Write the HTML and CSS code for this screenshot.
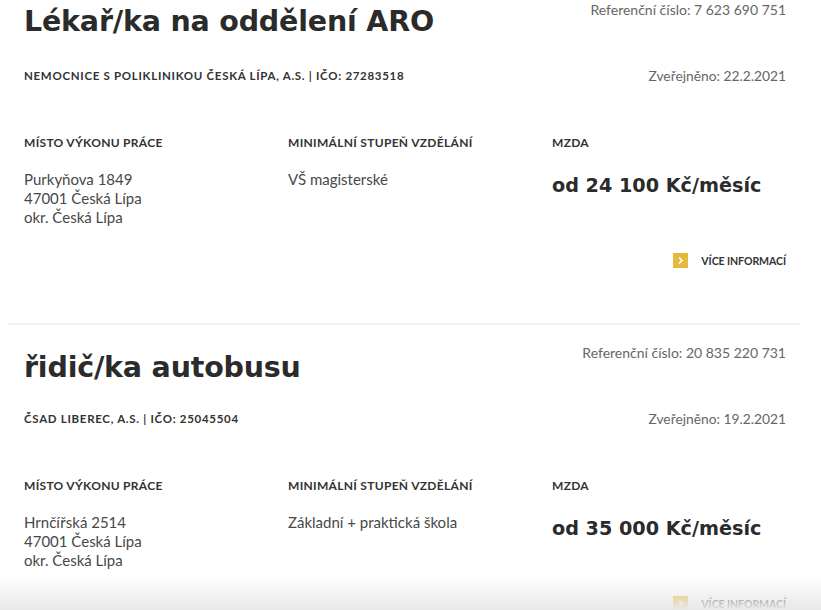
FILE: index.html
```
<!DOCTYPE html>
<html lang="cs">
<head>
<meta charset="utf-8">
<link rel="stylesheet" href="styles.css">
</head>
<body>
<div class="list">
  <article class="job">
    <div class="head">
      <h2 class="title">Lékař/ka na oddělení ARO</h2>
      <div class="ref">Referenční číslo: 7 623 690 751</div>
    </div>
    <div class="sub">
      <div class="company">NEMOCNICE S POLIKLINIKOU ČESKÁ LÍPA, A.S. | IČO: 27283518</div>
      <div class="date">Zveřejněno: 22.2.2021</div>
    </div>
    <div class="cols">
      <div class="col">
        <div class="label">MÍSTO VÝKONU PRÁCE</div>
        <div class="value">Purkyňova 1849<br>47001 Česká Lípa<br>okr. Česká Lípa</div>
      </div>
      <div class="col">
        <div class="label">MINIMÁLNÍ STUPEŇ VZDĚLÁNÍ</div>
        <div class="value">VŠ magisterské</div>
      </div>
      <div class="col">
        <div class="label">MZDA</div>
        <div class="salary">od 24 100 Kč/měsíc</div>
      </div>
    </div>
    <div class="more"><span class="arrow"><svg width="15" height="15" viewBox="0 0 15 15"><path d="M6 4.5 L9 7.5 L6 10.5" fill="none" stroke="#fff" stroke-width="1.6"/></svg></span><span class="more-text">VÍCE INFORMACÍ</span></div>
  </article>
  <article class="job">
    <div class="head">
      <h2 class="title">řidič/ka autobusu</h2>
      <div class="ref">Referenční číslo: 20 835 220 731</div>
    </div>
    <div class="sub">
      <div class="company">ČSAD LIBEREC, A.S. | IČO: 25045504</div>
      <div class="date">Zveřejněno: 19.2.2021</div>
    </div>
    <div class="cols">
      <div class="col">
        <div class="label">MÍSTO VÝKONU PRÁCE</div>
        <div class="value">Hrnčířská 2514<br>47001 Česká Lípa<br>okr. Česká Lípa</div>
      </div>
      <div class="col">
        <div class="label">MINIMÁLNÍ STUPEŇ VZDĚLÁNÍ</div>
        <div class="value">Základní + praktická škola</div>
      </div>
      <div class="col">
        <div class="label">MZDA</div>
        <div class="salary">od 35 000 Kč/měsíc</div>
      </div>
    </div>
    <div class="more"><span class="arrow"><svg width="15" height="15" viewBox="0 0 15 15"><path d="M6 4.5 L9 7.5 L6 10.5" fill="none" stroke="#fff" stroke-width="1.6"/></svg></span><span class="more-text">VÍCE INFORMACÍ</span></div>
  </article>
</div>
<div class="fade"></div>
</body>
</html>
```
FILE: styles.css
```
html, body {
  margin: 0;
  padding: 0;
  background: #fff;
  overflow: hidden;
}
body {
  font-family: "Lato", "Open Sans", sans-serif;
  color: #333;
}
.list {
  padding: 2px 0 0 0;
}
.job {
  margin: 0 21px 0 8px;
  padding: 0 14px 0 16px;
  border-bottom: 2px solid #f1f1f1;
  height: 321px;
}
.job + .job {
  border-bottom: none;
  padding-top: 20px;
}
.head {
  position: relative;
  height: 54px;
}
.title {
  margin: 0;
  font-family: "DejaVu Sans", sans-serif;
  font-weight: bold;
  font-size: 28.5px;
  line-height: 40px;
  color: #2b2b2b;
  letter-spacing: -0.2px;
}
.job + .job .title {
  padding-top: 3px;
}
.ref {
  position: absolute;
  top: 0;
  right: 0;
  font-size: 14px;
  line-height: 16px;
  color: #666;
}
.sub {
  display: flex;
  justify-content: space-between;
  align-items: center;
  margin-top: 11px;
  height: 16px;
}
.company {
  font-size: 11.5px;
  font-weight: bold;
  letter-spacing: 0.7px;
  color: #333;
}
.date {
  font-size: 13.8px;
  color: #666;
}
.cols {
  display: grid;
  grid-template-columns: 264px 264px 1fr;
  margin-top: 52px;
}
.label {
  font-size: 12px;
  font-weight: bold;
  letter-spacing: 0.3px;
  line-height: 16px;
  color: #333;
}
.value {
  margin-top: 19px;
  font-size: 15px;
  line-height: 19px;
  color: #484848;
}
.salary {
  margin-top: 23px;
  font-family: "DejaVu Sans", sans-serif;
  font-weight: bold;
  font-size: 19.2px;
  line-height: 24px;
  color: #2b2b2b;
}
.more {
  display: flex;
  justify-content: flex-end;
  align-items: center;
  margin-top: 26px;
  gap: 13px;
}
.arrow {
  display: block;
  width: 15px;
  height: 15px;
  background: #e6b93c;
}
.arrow svg {
  display: block;
}
.more-text {
  font-size: 10.6px;
  font-weight: bold;
  color: #333;
  letter-spacing: -0.1px;
}
.fade {
  position: fixed;
  left: 0;
  right: 0;
  bottom: 0;
  height: 34px;
  background: linear-gradient(to bottom, rgba(235,235,235,0), rgba(232,232,232,1));
  pointer-events: none;
}
```
